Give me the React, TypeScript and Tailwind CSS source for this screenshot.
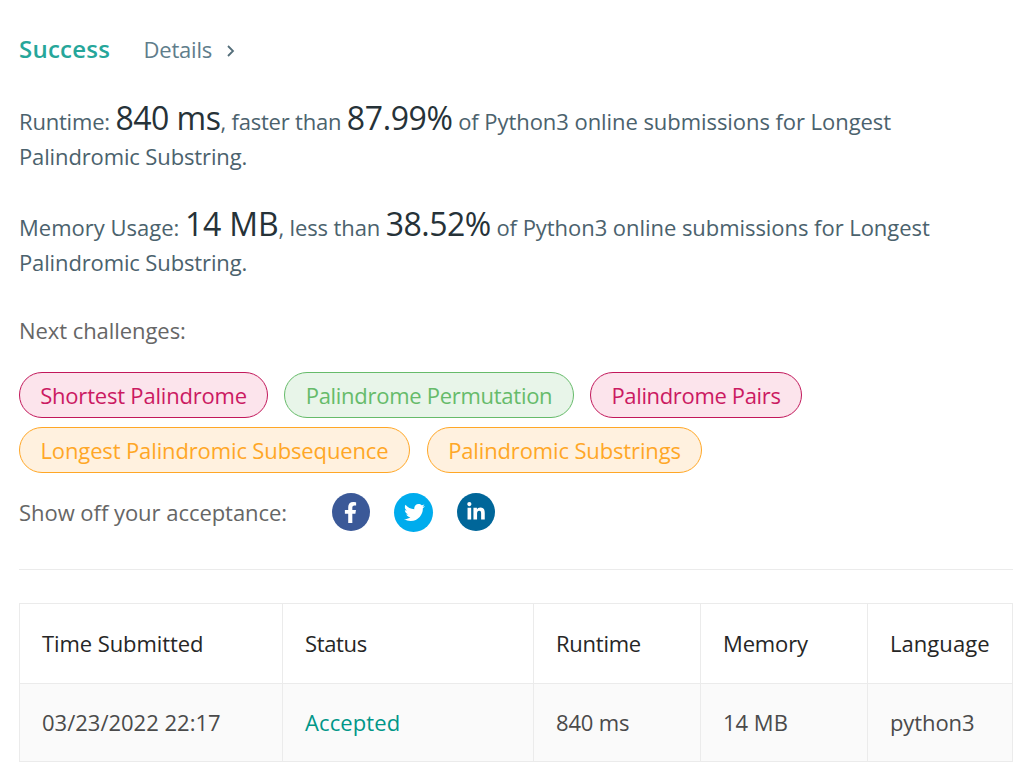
import { FaFacebookF, FaLinkedinIn, FaTwitter } from "react-icons/fa";

const challenges = [
  [
    { title: "Shortest Palindrome", style: "w-[249px] mr-4 border-[#c2185b] bg-[#fce4ec] text-[#cb1a62] tracking-[-0.2px]" },
    { title: "Palindrome Permutation", style: "w-[290px] mr-4 border-[#66bb6a] bg-[#e8f5e9] text-[#66bb6a] tracking-[-0.28px]" },
    { title: "Palindrome Pairs", style: "w-[212px] border-[#c2185b] bg-[#fce4ec] text-[#cb1a62] tracking-[-0.35px]" },
  ],
  [
    { title: "Longest Palindromic Subsequence", style: "w-[391px] mr-[17px] border-[#ffa726] bg-[#fff1df] text-[#ffa726] tracking-[-0.13px]" },
    { title: "Palindromic Substrings", style: "w-[275px] border-[#ffa726] bg-[#fff1df] text-[#ffa726] tracking-[-0.14px]" },
  ],
];

const cell = "border border-[#ebebeb] pl-[22px] text-left";

export default function App() {
  return (
    <main className="h-[763px] w-[1020px] overflow-hidden bg-white pl-[19px] pr-[7px] pt-[32px] font-['Open_Sans','Noto_Sans',sans-serif] text-[22px] leading-[35px] whitespace-nowrap text-[#607d8b]">
      <header className="flex h-[35px] items-center">
        <h1 className="-mt-[2px] w-[124.5px] text-[24px] font-semibold tracking-[0.25px] text-[#26a69a]">Success</h1>
        <span className="w-[82.5px] tracking-[-0.2px]">Details</span>
        <svg className="mt-[3px]" width="10" height="14" viewBox="0 0 10 14" fill="none" stroke="#546e7a" strokeWidth="1.8">
          <path d="M2 2l5 5-5 5" />
        </svg>
      </header>

      <section className="mt-[33px] text-[#4b626d]">
        <p className="h-[70px]">
          <span className="tracking-[-0.2px]">Runtime: </span>
          <span className="text-[32px] tracking-[-0.5px] text-[#263238]">840 ms</span>
          <span className="tracking-[-0.2px]">, faster than </span>
          <span className="text-[32px] tracking-[-0.4px] text-[#263238]">87.99%</span>
          <span className="tracking-[-0.06px]"> of Python3 online submissions for Longest</span>
          <br />
          <span className="tracking-[-0.13px]">Palindromic Substring.</span>
        </p>
        <p className="mt-9 h-[70px]">
          Memory Usage: <span className="text-[32px] tracking-[-0.2px] text-[#263238]">14 MB</span>
          <span className="tracking-[-0.12px]">, less than </span>
          <span className="text-[32px] tracking-[-0.5px] text-[#263238]">38.52%</span>
          <span className="tracking-[-0.05px]"> of Python3 online submissions for Longest</span>
          <br />
          <span className="tracking-[-0.13px]">Palindromic Substring.</span>
        </p>
      </section>

      <section className="text-[#666666]">
        <h2 className="mt-[37px] tracking-[-0.06px]">Next challenges:</h2>
        <div className="mt-[24px] flex flex-col gap-[9px]">
          {challenges.map((row, i) => (
            <div key={i} className="flex">
              {row.map((c) => (
                <a key={c.title} className={`flex h-[46px] items-center justify-center rounded-full border ${c.style}`}>
                  {c.title}
                </a>
              ))}
            </div>
          ))}
        </div>
        <div className="mt-[19px] flex h-[40px] items-center">
          <span className="w-[313px] tracking-[-0.04px]">Show off your acceptance:</span>
          <a className="mr-6 flex size-[38px] items-center justify-center rounded-full bg-[#3b5998] pr-[2px] pt-px text-white">
            <FaFacebookF size={21} />
          </a>
          <a className="mr-6 flex size-[39px] items-center justify-center rounded-full bg-[#00aced] pl-[2px] text-white">
            <FaTwitter size={21} />
          </a>
          <a className="flex size-[38px] items-center justify-center rounded-full bg-[#006699] text-white">
            <FaLinkedinIn size={20} />
          </a>
        </div>
      </section>

      <hr className="mt-[37px] border-[#ebebeb]" />

      <table className="mt-[33px] w-[993px] table-fixed border-collapse text-[#4a4a4a]">
        <colgroup>
          <col className="w-[263px]" />
          <col className="w-[251px]" />
          <col className="w-[167px]" />
          <col className="w-[167px]" />
          <col className="w-[145px]" />
        </colgroup>
        <thead className="text-[#262626]">
          <tr className="h-[80px]">
            <th className={`${cell} font-normal tracking-[-0.08px]`}>Time Submitted</th>
            <th className={`${cell} font-normal tracking-[-0.35px]`}>Status</th>
            <th className={`${cell} font-normal tracking-[-0.25px]`}>Runtime</th>
            <th className={`${cell} font-normal tracking-[-0.15px]`}>Memory</th>
            <th className={`${cell} font-normal tracking-[0.05px]`}>Language</th>
          </tr>
        </thead>
        <tbody>
          <tr className="h-[78px] bg-[#fafafa]">
            <td className={cell}>03/23/2022 22:17</td>
            <td className={`${cell} tracking-[0.1px] text-[#009688]`}>Accepted</td>
            <td className={`${cell} tracking-[-0.15px]`}>840 ms</td>
            <td className={cell}>14 MB</td>
            <td className={`${cell} tracking-[-0.1px]`}>python3</td>
          </tr>
        </tbody>
      </table>
    </main>
  );
}
